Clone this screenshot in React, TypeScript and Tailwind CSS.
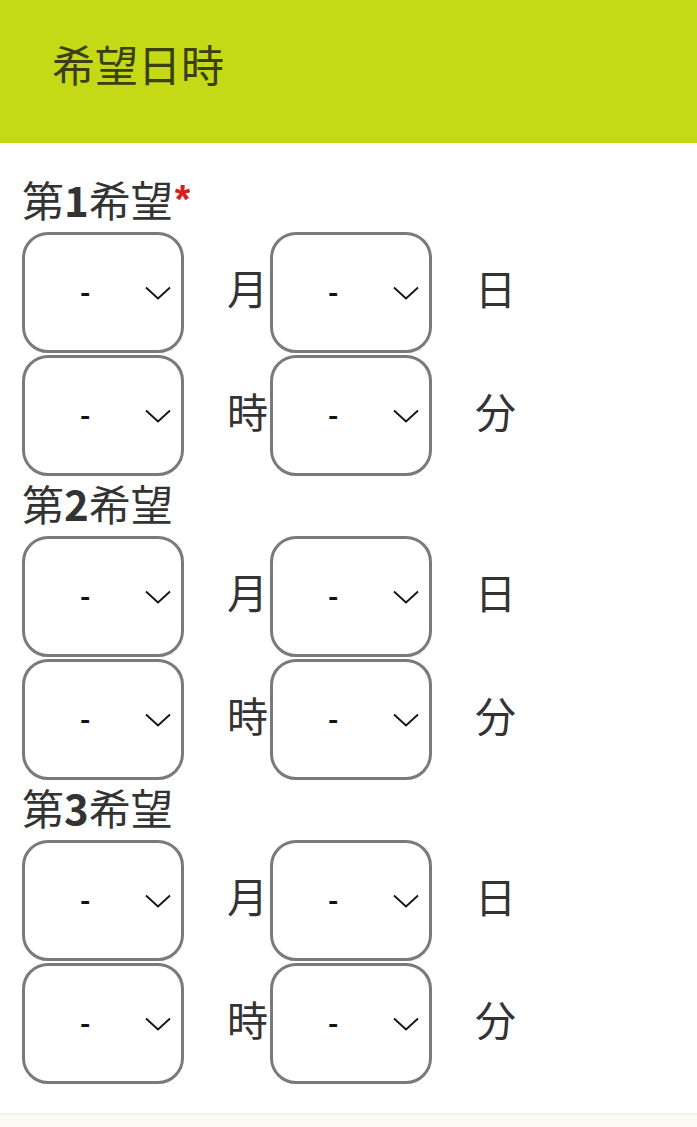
const FONT = "font-['Noto_Sans_CJK_JP','Noto_Sans',sans-serif]"

function Chevron() {
  return (
    <svg viewBox="0 0 26 14" className="h-[14px] w-[26px]" fill="none" stroke="#111" strokeWidth="1.8">
      <path d="M1 1.5 L13 12.5 L25 1.5" />
    </svg>
  )
}

function SelectBox() {
  return (
    <div className="relative flex h-[121px] w-[162px] shrink-0 items-center rounded-[26px] border-[3px] border-[#7a7a7a] bg-white">
      <span className="mb-[4px] ml-[55px] text-[28px] font-bold leading-none text-[#111]">-</span>
      <span className="absolute right-[10px] top-1/2 -translate-y-1/2">
        <Chevron />
      </span>
    </div>
  )
}

function Row({ a, b }: { a: string; b: string }) {
  return (
    <div className="mb-[2px] flex items-center">
      <SelectBox />
      <span className="mb-[10px] ml-[43px] w-[40px] text-[41px] leading-none text-[#333]">{a}</span>
      <span className="ml-[3px]" />
      <SelectBox />
      <span className="mb-[10px] ml-[43px] w-[40px] text-[41px] leading-none text-[#333]">{b}</span>
    </div>
  )
}

function Group({ n, required }: { n: number; required?: boolean }) {
  return (
    <div>
      <div className="flex h-[58px] items-center pb-[8px] text-[42px] leading-none text-[#333]">
        <span>第</span>
        <span className="font-bold">{n}</span>
        <span>希望</span>
        {required && (
          <span className="ml-[2px] font-['Liberation_Sans',sans-serif] text-[40px] font-bold text-[#dc1c1c]">*</span>
        )}
      </div>
      <Row a="月" b="日" />
      <Row a="時" b="分" />
    </div>
  )
}

export default function App() {
  return (
    <div className={`min-h-[1127px] w-[697px] bg-white ${FONT}`}>
      {/* Header */}
      <div className="flex h-[143px] items-center bg-[#c5d916] pb-[16px] pl-[52px]">
        <h1 className="text-[43px] font-normal leading-none text-[#3a4012]">希望日時</h1>
      </div>

      {/* Preferred dates */}
      <div className="h-[970px] px-[22px] pt-[31px]">
        <Group n={1} required />
        <Group n={2} />
        <Group n={3} />
      </div>
      <div className="h-[14px] border-t-[2px] border-[#f3f3e4] bg-[#fbfbf4]" />
    </div>
  )
}
